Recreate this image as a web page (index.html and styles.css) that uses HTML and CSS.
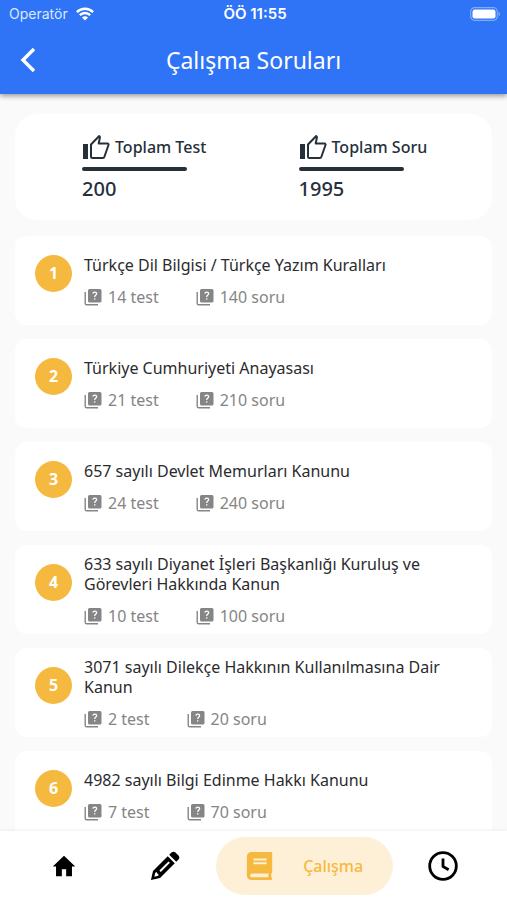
FILE: index.html
```html
<!DOCTYPE html>
<html lang="tr">
<head>
<meta charset="utf-8">
<meta name="viewport" content="width=device-width, initial-scale=1">
<title>Çalışma Soruları</title>
<link rel="stylesheet" href="styles.css">
</head>
<body>
<svg class="sprite" aria-hidden="true">
  <symbol id="quiz" viewBox="0 0 18 18">
    <path d="M1.2 4v11.2c0 1 .6 1.6 1.6 1.6H14" fill="none" stroke="currentColor" stroke-width="1.4"/>
    <path fill="currentColor" fill-rule="evenodd" d="M5.500 1h10.500a1.500 1.500 0 0 1 1.500 1.500v10.500a1.500 1.500 0 0 1-1.500 1.500H5.500A1.500 1.500 0 0 1 4 13V2.500A1.500 1.500 0 0 1 5.500 1z"/>
    <path d="M8.900 5.600c.2-2.200 3.800-2 3.700.1 0 1.300-1.900 1.500-1.900 3.200" fill="none" stroke="#fff" stroke-width="1.300"/>
    <path d="M10 10.200h1.400v1.400H10z" fill="#fff"/>
  </symbol>
  <symbol id="thumb" viewBox="0 0 28 26">
    <path d="M1 10h5v15H1z" fill="currentColor"/>
    <path d="M9 10.500 17.200 2l.8 1-1.300 6.500h8.800c.8 0 1.300.7 1 1.500l-4.200 12c-.2.600-.7 1-1.300 1H10.500c-.8 0-1.500-.7-1.500-1.500z" fill="none" stroke="currentColor" stroke-width="2" stroke-linejoin="round"/>
  </symbol>
</svg>
<header class="header">
  <div class="status">
    <span class="carrier">Operatör
      <svg class="wifi" viewBox="0 0 18 14" aria-hidden="true"><g fill="none" stroke="#fff" stroke-width="2.400"><path d="M.9 5.100c4.600-4.500 11.600-4.500 16.200 0"/><path d="M3.800 8.100c3-2.900 7.400-2.900 10.400 0"/></g><path d="M6 10.400c1.700-1.600 4.300-1.600 6 0l-3 3.100z" fill="#fff"/></svg>
    </span>
    <span class="time">ÖÖ 11:55</span>
    <svg class="battery" viewBox="0 0 31 14" aria-hidden="true"><rect x=".7" y=".7" width="26.600" height="12.600" rx="4" fill="none" stroke="#fff" stroke-opacity=".4" stroke-width="1.200"/><rect x="2.500" y="2.500" width="23" height="9" rx="2.300" fill="#fff"/><path d="M28.700 4.800c1.800.8 1.800 3.600 0 4.400z" fill="#fff" fill-opacity=".45"/></svg>
  </div>
  <div class="bar">
    <button class="back" type="button" aria-label="Geri"><svg viewBox="0 0 16 26" aria-hidden="true"><path d="M14 2 3 13l11 11" fill="none" stroke="#fff" stroke-width="3.400"/></svg></button>
    <h1 class="heading">Çalışma Soruları</h1>
  </div>
</header>
<main class="content">
  <section class="stats">
    <div class="stat"><h2 class="stat-label"><svg aria-hidden="true"><use href="#thumb"/></svg>Toplam Test</h2><div class="rule"></div><p class="stat-value">200</p></div>
    <div class="stat"><h2 class="stat-label"><svg aria-hidden="true"><use href="#thumb"/></svg>Toplam Soru</h2><div class="rule"></div><p class="stat-value">1995</p></div>
  </section>
  <ol class="list">
    <li class="card"><span class="number">1</span><div class="info"><h3 class="title">Türkçe Dil Bilgisi / Türkçe Yazım Kuralları</h3><div class="meta"><span><svg aria-hidden="true"><use href="#quiz"/></svg>14 test</span><span><svg aria-hidden="true"><use href="#quiz"/></svg>140 soru</span></div></div></li>
    <li class="card"><span class="number">2</span><div class="info"><h3 class="title">Türkiye Cumhuriyeti Anayasası</h3><div class="meta"><span><svg aria-hidden="true"><use href="#quiz"/></svg>21 test</span><span><svg aria-hidden="true"><use href="#quiz"/></svg>210 soru</span></div></div></li>
    <li class="card"><span class="number">3</span><div class="info"><h3 class="title">657 sayılı Devlet Memurları Kanunu</h3><div class="meta"><span><svg aria-hidden="true"><use href="#quiz"/></svg>24 test</span><span><svg aria-hidden="true"><use href="#quiz"/></svg>240 soru</span></div></div></li>
    <li class="card"><span class="number">4</span><div class="info"><h3 class="title">633 sayılı Diyanet İşleri Başkanlığı Kuruluş ve Görevleri Hakkında Kanun</h3><div class="meta"><span><svg aria-hidden="true"><use href="#quiz"/></svg>10 test</span><span><svg aria-hidden="true"><use href="#quiz"/></svg>100 soru</span></div></div></li>
    <li class="card"><span class="number">5</span><div class="info"><h3 class="title">3071 sayılı Dilekçe Hakkının Kullanılmasına Dair Kanun</h3><div class="meta"><span><svg aria-hidden="true"><use href="#quiz"/></svg>2 test</span><span><svg aria-hidden="true"><use href="#quiz"/></svg>20 soru</span></div></div></li>
    <li class="card"><span class="number">6</span><div class="info"><h3 class="title">4982 sayılı Bilgi Edinme Hakkı Kanunu</h3><div class="meta"><span><svg aria-hidden="true"><use href="#quiz"/></svg>7 test</span><span><svg aria-hidden="true"><use href="#quiz"/></svg>70 soru</span></div></div></li>
  </ol>
</main>
<nav class="nav">
  <a class="tab" href="#" aria-label="Ana sayfa"><svg viewBox="0 0 32 32" aria-hidden="true"><path d="M16 5 4 16.500h3.500v10.300h6.200v-7.300h4.600v7.300h6.200V16.500H28z"/></svg></a>
  <a class="tab" href="#" aria-label="Testler"><svg viewBox="0 0 32 32" aria-hidden="true"><path fill-rule="evenodd" d="M1 31 3.200 21.300 18.900 5.600l7.500 7.500L10.700 28.800zM5.600 23.200l-1 4.200 4.200-1 .2-2.200-1.500-.2-.1-1.500zM10 20.800l1.500 1.500L21.200 12.600l-1.500-1.500z"/><path d="m20.500 4 2.400-2.400c1.200-1.200 3-1.200 4.200 0l3.300 3.300c1.200 1.200 1.200 3 0 4.200L28 11.500z"/></svg></a>
  <a class="tab active" href="#" aria-current="page"><svg viewBox="0 0 32 32" aria-hidden="true"><path fill-rule="evenodd" d="M7 1h20.500a1.500 1.500 0 0 1 1.500 1.500v20c0 .7-.4 1.200-1 1.400v4.200c.6.200 1 .7 1 1.300 0 .9-.6 1.600-1.500 1.600H7a5 5 0 0 1-5-5V6a5 5 0 0 1 5-5zm2 7v2h14V8zm0 4v2h14v-2zM7.500 24a2 2 0 0 0 0 4H25v-4z"/></svg><span>Çalışma</span></a>
  <a class="tab" href="#" aria-label="Geçmiş"><svg viewBox="0 0 32 32" aria-hidden="true"><circle cx="16" cy="16" r="14.200" fill="none" stroke="#000" stroke-width="3"/><path d="M16 8v8.500l6 3.500" fill="none" stroke="#000" stroke-width="3"/></svg></a>
</nav>
</body>
</html>
```
FILE: styles.css
```css
* { box-sizing: border-box; }
body {
  margin: 0;
  height: 100vh;
  display: flex;
  flex-direction: column;
  background: #fafafa;
  color: #2b2b2e;
  font-family: "Noto Sans", sans-serif;
}
h1, h2, h3, p, ol { margin: 0; padding: 0; }
.sprite { display: none; }

.header {
  flex: none;
  background: #2f74f6;
  color: #fff;
  box-shadow: 0 2px 5px rgba(0, 0, 0, .4);
  z-index: 1;
}
.status {
  display: grid;
  grid-template-columns: 1fr auto 1fr;
  align-items: center;
  height: 27px;
  padding: 0 6px 0 9px;
  font: 14px/20px Inter, sans-serif;
}
.carrier { display: flex; align-items: center; gap: 8px; color: #dce8ff; }
.wifi { width: 18px; height: 14px; }
.time { font-size: 15px; font-weight: 600; }
.battery { width: 31px; height: 14px; justify-self: end; }
.bar {
  display: grid;
  grid-template-columns: 48px 1fr 48px;
  align-items: center;
  height: 67px;
  padding: 0 4px 2px;
}
.back {
  width: 32px;
  height: 40px;
  padding: 0;
  border: 0;
  background: none;
  justify-self: center;
}
.back svg { width: 16px; height: 26px; display: block; margin: auto; }
.heading { font-size: 23px; line-height: 32px; font-weight: 400; text-align: center; }

.content { flex: 1; min-height: 0; overflow: hidden; padding: 20px 15px 0; }
.stats {
  display: grid;
  grid-template-columns: 1fr 1fr;
  padding: 17px 22px 18px;
  background: #fff;
  border-radius: 22px;
  color: #26303b;
}
.stat { padding-left: 45px; }
.stat-label {
  display: flex;
  align-items: center;
  gap: 5px;
  height: 32px;
  font-size: 16px;
  font-weight: 500;
  white-space: nowrap;
}
.stat-label svg { width: 28px; height: 26px; flex: none; }
.rule { width: 105px; height: 4px; margin-top: 4px; border-radius: 2px; background: #26303b; }
.stat-value { margin-top: 5px; font-size: 20px; line-height: 26px; font-weight: 500; }

.list { display: grid; gap: 14px; margin-top: 16px; list-style: none; }
.card {
  display: flex;
  gap: 12px;
  min-height: 89px;
  padding: 1px 20px 0;
  background: #fff;
  border-radius: 12px;
}
.number {
  flex: none;
  width: 37px;
  height: 37px;
  margin-top: 18px;
  border-radius: 50%;
  background: #f5b93f;
  color: #fff;
  font-size: 16px;
  line-height: 37px;
  font-weight: 700;
  text-align: center;
}
.info { flex: 1; display: flex; flex-direction: column; justify-content: center; gap: 12px; }
.title { font-size: 16px; line-height: 20px; font-weight: 400; }
.meta { display: flex; gap: 37px; color: #858585; font-size: 16px; line-height: 20px; }
.meta span { display: flex; align-items: center; gap: 6px; }
.meta svg { width: 18px; height: 18px; }

.nav {
  flex: none;
  display: flex;
  align-items: center;
  height: 69px;
  padding: 0 13px;
  background: #fff;
  box-shadow: 0 -1px 3px rgba(0, 0, 0, .06);
}
.tab {
  flex: 1;
  display: flex;
  align-items: center;
  justify-content: center;
  height: 58px;
  text-decoration: none;
}
.tab svg { width: 30px; height: 30px; }
.tab.active {
  flex: none;
  width: 177px;
  gap: 28px;
  border-radius: 29px;
  background: #fdf0d6;
  color: #f5b93f;
  fill: #f5b93f;
  font-size: 16px;
  font-weight: 500;
}
```
